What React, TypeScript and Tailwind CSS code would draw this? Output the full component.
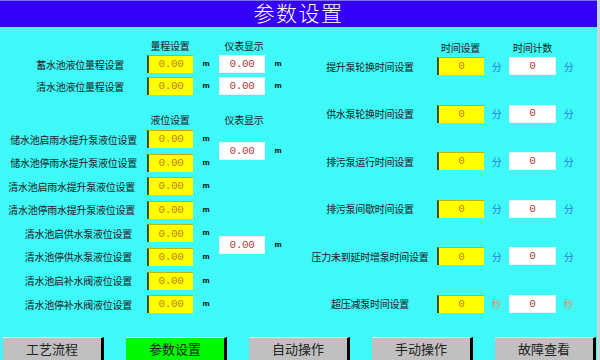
const levelRows = [
  { label: "储水池启雨水提升泵液位设置", pr: "pr-[10px]" },
  { label: "储水池停雨水提升泵液位设置", pr: "pr-[10px]" },
  { label: "清水池启雨水提升泵液位设置", pr: "pr-[12px]" },
  { label: "清水池停雨水提升泵液位设置", pr: "pr-[12px]" },
  { label: "清水池启供水泵液位设置", pr: "pr-[15px]" },
  { label: "清水池停供水泵液位设置", pr: "pr-[15px]" },
  { label: "清水池启补水阀液位设置", pr: "pr-[15px]" },
  { label: "清水池停补水阀液位设置", pr: "pr-[15px]" },
];

const timeRows = [
  { label: "提升泵轮换时间设置", unit: "分" },
  { label: "供水泵轮换时间设置", unit: "分" },
  { label: "排污泵运行时间设置", unit: "分" },
  { label: "排污泵间歇时间设置", unit: "分" },
  { label: "压力未到延时增泵时间设置", unit: "分" },
  { label: "超压减泵时间设置", unit: "秒" },
];

const tabs = ["工艺流程", "参数设置", "自动操作", "手动操作", "故障查看"];

const cjk = "font-['Noto_Sans_CJK_SC','Noto_Sans',sans-serif]";
const mono = "font-['Liberation_Mono','DejaVu_Sans_Mono',monospace]";

function SetBox({ value, w = "w-[46px]" }: { value: string; w?: string }) {
  return (
    <div
      className={`${w} h-[18px] flex items-center justify-center bg-[#ffff00] border-l-2 border-l-[#4a4a00] border-t border-t-[#b8b800] ${mono} text-[11px] tracking-[-0.3px] text-[#c08018]`}
    >
      {value}
    </div>
  );
}

function ShowBox({ value, w = "w-[46px]" }: { value: string; w?: string }) {
  return (
    <div
      className={`${w} h-[18px] flex items-center justify-center bg-white border border-[#e4f4f4] ${mono} text-[11px] tracking-[-0.3px] text-[#b03a3a]`}
    >
      {value}
    </div>
  );
}

function Meter() {
  return <div className="w-[26px] flex justify-center text-[8px] font-bold text-black font-['Liberation_Sans',sans-serif]">m</div>;
}

export default function App() {
  return (
    <div className={`w-[600px] h-[360px] flex flex-col bg-[#3ff8f8] border-r-[3px] border-r-[#c8d8d8] ${cjk}`}>
      {/* Title */}
      <div className="h-[27px] shrink-0 flex items-center justify-center bg-[#3500f8] border-t border-t-[#7a70f0] border-b border-b-[#2a10c0]">
        <div className="text-[21px] leading-[25px] text-white font-light tracking-[1.5px] font-['Liberation_Sans','Noto_Sans_CJK_SC',sans-serif]">
          参数设置
        </div>
      </div>

      <div className="flex-1 flex">
        {/* Left: level settings */}
        <div className="w-[300px] flex flex-col text-[10px] tracking-[-0.25px] text-[#202020]">
          <div className="mt-[10px] h-[16px] flex items-center">
            <div className="w-[147px]" />
            <div className="w-[46px] text-center">量程设置</div>
            <div className="w-[26px]" />
            <div className="w-[50px] text-center">仪表显示</div>
          </div>
          <div className="mt-[2px] flex flex-col gap-[4px]">
            {["蓄水池液位量程设置", "清水池液位量程设置"].map((l) => (
              <div key={l} className="h-[18px] flex items-center">
                <div className="w-[147px] text-right pr-[23px]">{l}</div>
                <SetBox value="0.00" />
                <Meter />
                <ShowBox value="0.00" />
                <Meter />
              </div>
            ))}
          </div>

          <div className="mt-[16px] h-[16px] flex items-center">
            <div className="w-[147px]" />
            <div className="w-[46px] text-center">液位设置</div>
            <div className="w-[26px]" />
            <div className="w-[50px] text-center">仪表显示</div>
          </div>
          <div className="mt-[3px] flex">
            <div className="flex flex-col gap-[5.6px]">
              {levelRows.map((r) => (
                <div key={r.label} className="h-[18px] flex items-center">
                  <div className={`w-[147px] text-right ${r.pr}`}>{r.label}</div>
                  <SetBox value="0.00" />
                  <Meter />
                </div>
              ))}
            </div>
            <div className="flex flex-col">
              <div className="mt-[12px] h-[18px] flex items-center">
                <ShowBox value="0.00" />
                <Meter />
              </div>
              <div className="mt-[76px] h-[18px] flex items-center">
                <ShowBox value="0.00" />
                <Meter />
              </div>
            </div>
          </div>
        </div>

        {/* Right: time settings */}
        <div className="flex-1 flex flex-col text-[10px] tracking-[-0.25px] text-[#202020]">
          <div className="mt-[12px] h-[16px] flex items-center">
            <div className="w-[137px]" />
            <div className="w-[47px] text-center">时间设置</div>
            <div className="w-[25px]" />
            <div className="w-[47px] text-center">时间计数</div>
          </div>
          <div className="mt-[2px] flex flex-col gap-[29.6px]">
            {timeRows.map((r) => (
              <div key={r.label} className="h-[18px] flex items-center">
                <div className="w-[137px] pl-[3px] text-center">{r.label}</div>
                <SetBox value="0" w="w-[47px]" />
                <div className={`w-[25px] text-center text-[10px] ${r.unit === "秒" ? "text-[#c8a070]" : "text-[#2a7ad8]"}`}>{r.unit}</div>
                <ShowBox value="0" w="w-[47px]" />
                <div className={`w-[25px] text-center text-[10px] ${r.unit === "秒" ? "text-[#c8a070]" : "text-[#2a7ad8]"}`}>{r.unit}</div>
              </div>
            ))}
          </div>
        </div>
      </div>

      {/* Bottom tabs */}
      <div className="h-[23px] shrink-0 flex pl-[3px] gap-[22px]">
        {tabs.map((t) => (
          <div
            key={t}
            className={`w-[101px] h-full flex items-center justify-center text-[13px] text-[#222] border-t border-t-[#eeeeee] border-r-[3px] border-r-black ${
              t === "参数设置" ? "bg-[#00f800]" : "bg-[#c0c0c0]"
            }`}
          >
            {t}
          </div>
        ))}
      </div>
    </div>
  );
}
